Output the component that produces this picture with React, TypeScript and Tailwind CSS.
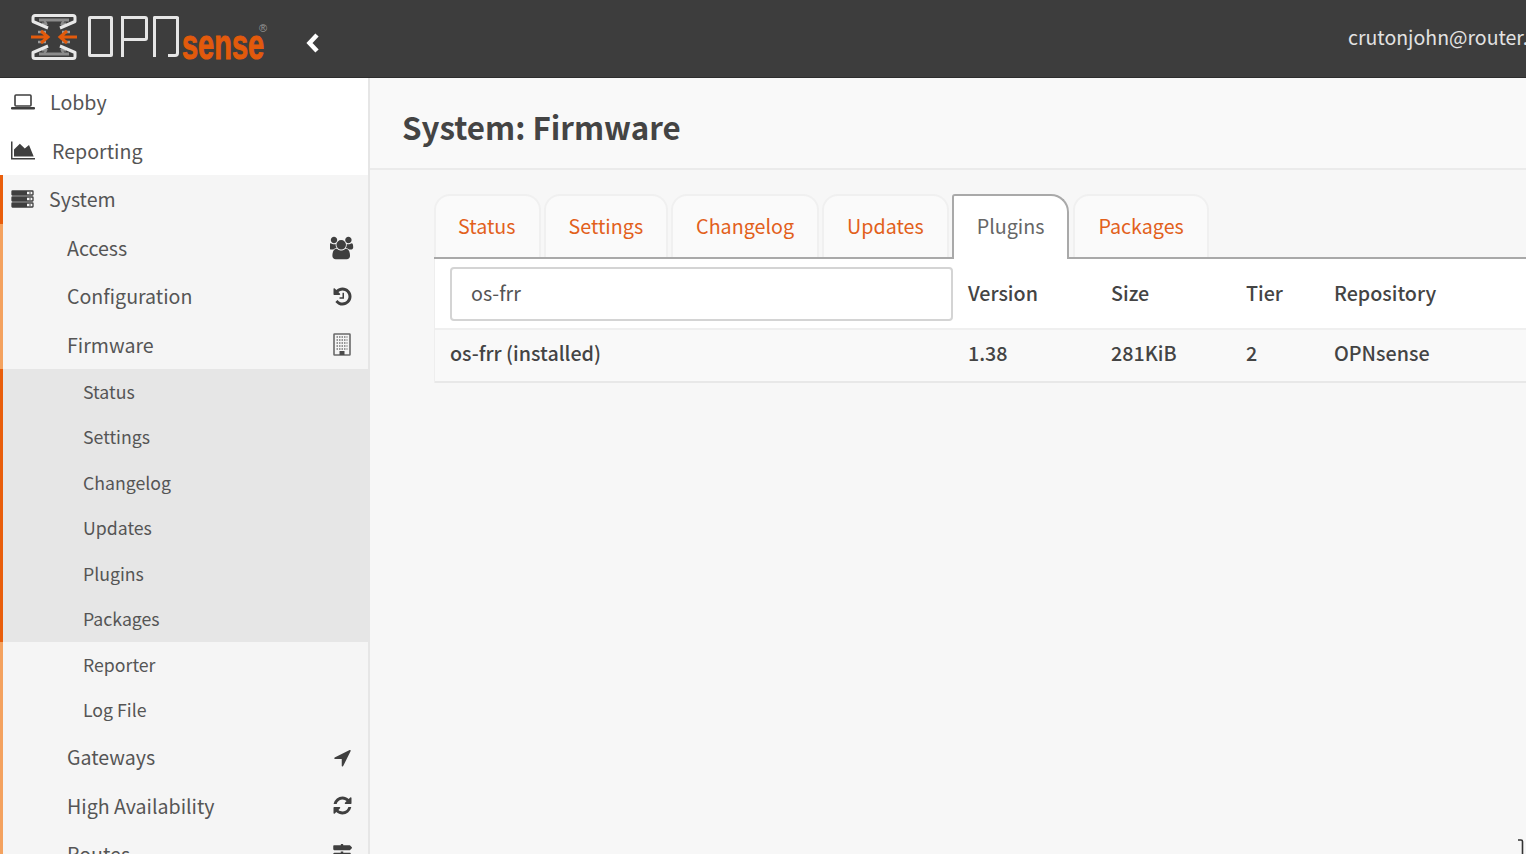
import { FaMapSigns } from 'react-icons/fa'
import type { ReactNode } from 'react'

// icon paths below are the old font-awesome 4 shapes, the fa set in react-icons only has v5
function FaFour({ d, w, size }: { d: string; w: number; size: number }) {
  return (
    <svg width={size} height={size} viewBox={`0 0 ${w} 1792`} fill="#3f3f3f">
      <path d={d} />
    </svg>
  )
}

const usersPath =
  'M529 896q-162 5-265 128h-134q-82 0-138-40.500t-56-118.500q0-353 124-353 6 0 43.500 21t97.500 42.500 119 21.500q67 0 133-23-5 37-5 66 0 139 81 256zm1071 637q0 120-73 189.500t-194 69.500h-874q-121 0-194-69.500t-73-189.500q0-53 3.500-103.500t14-109 26.500-108.500 43-97.500 62-81 85.500-53.500 111.500-20q10 0 43 21.500t73 48 107 48 135 21.500 135-21.500 107-48 73-48 43-21.500q61 0 111.500 20t85.500 53.500 62 81 43 97.500 26.500 108.500 14 109 3.500 103.500zm-1024-1277q0 106-75 181t-181 75-181-75-75-181 75-181 181-75 181 75 75 181zm704 384q0 159-112.500 271.500t-271.500 112.500-271.500-112.500-112.500-271.500 112.500-271.500 271.500-112.500 271.500 112.500 112.500 271.500zm576 225q0 78-56 118.500t-138 40.500h-134q-103-123-265-128 81-117 81-256 0-29-5-66 66 23 133 23 59 0 119-21.500t97.500-42.500 43.500-21q124 0 124 353zm-128-609q0 106-75 181t-181 75-181-75-75-181 75-181 181-75 181 75 75 181z'
const historyPath =
  'M1536 896q0 156-61 298t-164 245-245 164-298 61q-172 0-327-72.500t-264-204.500q-7-10-6.500-22.500t8.500-20.500l137-138q10-9 25-9 16 2 23 12 73 95 179 147t225 52q104 0 198.500-40.500t163.500-109.500 109.500-163.500 40.500-198.500-40.500-198.500-109.500-163.500-163.500-109.500-198.500-40.500q-98 0-188 35.500t-160 101.500l137 138q31 30 14 69-17 40-59 40h-448q-26 0-45-19t-19-45v-448q0-42 40-59 39-17 69 14l130 129q107-101 244.500-156.500t284.500-55.500q156 0 298 61t245 164 164 245 61 298zm-640-288v448q0 14-9 23t-23 9h-320q-14 0-23-9t-9-23v-64q0-14 9-23t23-9h224v-352q0-14 9-23t23-9h64q14 0 23 9t9 23z'
const arrowPath =
  'M1593 349l-640 1280q-17 35-57 35-5 0-15-2-22-5-35.500-22.500t-13.500-39.500v-576h-576q-22 0-39.500-13.500t-22.500-35.500 4-42 29-30l1280-640q13-7 29-7 27 0 45 19 15 14 18.500 34.500t-6.500 39.500z'
const refreshPath =
  'M1511 1056q0 5-1 7-64 268-268 434.500t-478 166.500q-146 0-282.500-55t-243.500-157l-129 129q-19 19-45 19t-45-19-19-45v-448q0-26 19-45t45-19h448q26 0 45 19t19 45-19 45l-137 137q71 66 161 102t187 36q134 0 250-65t186-179q11-17 53-117 8-23 30-23h192q13 0 22.500 9.500t9.500 22.500zm25-800v448q0 26-19 45t-45 19h-448q-26 0-45-19t-19-45 19-45l138-138q-148-137-349-137-134 0-250 65t-186 179q-11 17-53 117-8 23-30 23h-199q-13 0-22.500-9.500t-9.500-22.500v-7q65-268 270-434.500t480-166.500q146 0 284 55.500t245 156.500l130-129q19-19 45-19t45 19 19 45z'

function AreaIcon() {
  return (
    <svg width="26" height="23" viewBox="0 0 2048 1792" fill="#3f3f3f">
      <path d="M2048 1536v128H0V128h128v1408h1920zM256 1408V800l500-480 420 400 360-300 400 988z" />
    </svg>
  )
}

function LaptopIcon() {
  return (
    <svg width="24" height="18" viewBox="0 0 24 18" fill="none" stroke="#3f3f3f">
      <rect x="4" y="2" width="16" height="11" rx="1" strokeWidth="1.6" />
      <path d="M1 15.2h22" strokeWidth="2.4" strokeLinecap="round" />
    </svg>
  )
}

function ServerIcon() {
  return (
    <svg width="24" height="18" viewBox="0 0 24 18" fill="none">
      {[1, 7, 13].map((y) => (
        <g key={y}>
          <rect x="1" y={y} width="21" height="4" rx="0.5" stroke="#3f3f3f" strokeWidth="1.3" />
          <rect x="1" y={y} width="15" height="4" fill="#3f3f3f" />
          <rect x="18" y={y + 1.2} width="2" height="1.6" fill="#8a8a8a" />
        </g>
      ))}
    </svg>
  )
}

function BuildingIcon() {
  return (
    <svg width="18" height="23" viewBox="0 0 18 23" fill="none">
      <rect x="1" y="1" width="16" height="21" rx="0.5" stroke="#6a6a6a" strokeWidth="1.6" />
      <path d="M3.5 4h11M3.5 7h11M3.5 10h11M3.5 13h11M3.5 16h11" stroke="#777777" strokeWidth="1.6" strokeDasharray="1.5 1" />
      <rect x="6.5" y="18" width="5" height="4" fill="#4a4a4a" />
    </svg>
  )
}

function LogoMark() {
  return (
    <svg width="48" height="48" viewBox="0 0 48 48" fill="none" className="shrink-0">
      <path d="M9 7h30M9 41h30M12 11h5M31 11h5M12 37h5M31 37h5" stroke="#8c8c8c" strokeWidth="3" />
      <path d="M14 7l3 5M34 7l-3 5M14 41l3-5M34 41l-3-5" stroke="#8c8c8c" strokeWidth="2" />
      <path
        d="M5 2.5h38a2 2 0 0 1 2 2v4L30 15M3 4.500a2 2 0 0 1 2-2M3 4.500v4L18 15M5 45.500h38a2 2 0 0 0 2-2v-4L30 33M3 43.500a2 2 0 0 0 2 2M3 43.500v-4L18 33"
        stroke="#e8e8e8"
        strokeWidth="3"
        strokeLinejoin="round"
      />
      <path d="M8 19h8M8 29h8M32 19h8M32 29h8" stroke="#9a9a9a" strokeWidth="2.5" />
      <path d="M1 24h17M11 18l7 6-7 6M47 24H30M37 18l-7 6 7 6" stroke="#e25a0c" strokeWidth="3" />
    </svg>
  )
}

function Logo() {
  return (
    <div className="-mt-[4px] flex items-start" aria-label="OPNsense">
      <LogoMark />
      <div className="ml-[10px] mt-[3px] flex h-[41px] shrink-0">
        <div className="h-[41px] w-[25px] rounded-[2px] border-[3px] border-[#e6e6e6]" />
        <div className="ml-[8px] flex w-[27px] flex-col">
          <div className="h-[25px] rounded-tr-[3px] rounded-br-[3px] border-[3px] border-[#e6e6e6]" />
          <div className="h-[16px] w-[3px] bg-[#e6e6e6]" />
        </div>
        <div className="ml-[5px] flex">
          <div className="h-[41px] w-[15px] rounded-tl-[2px] border-l-[3px] border-t-[3px] border-[#e6e6e6]" />
          <div className="h-[41px] w-[11px] rounded-tr-[2px] rounded-br-[4px] border-r-[3px] border-t-[3px] border-b-[3px] border-[#e6e6e6]" />
        </div>
      </div>
      <div className="relative ml-[3px] mt-[19px] h-[26px] w-[84px]">
        <span className="block w-[120px] origin-left scale-x-[0.69] font-['Liberation_Sans',sans-serif] text-[42px] leading-[26px] font-bold text-[#e25a0c] [-webkit-text-stroke:1px_#e25a0c]">
          sense
        </span>
        <span className="absolute -top-[9px] -right-[1px] font-['Liberation_Sans',sans-serif] text-[11px] leading-[10px] text-[#9a9a9a]">®</span>
      </div>
    </div>
  )
}

function TopRow({ icon, label, gap, active }: { icon: ReactNode; label: string; gap: string; active?: boolean }) {
  return (
    <div
      className={`flex h-[48.5px] items-center border-l-[3px] pl-[8px] text-[19.6px] ${
        active ? 'border-[#e95e0b] bg-[#f5f5f5]' : 'border-white bg-white'
      }`}
    >
      <span className="flex w-[24px] shrink-0 items-center justify-center">{icon}</span>
      <span className={`pb-[1px] ${gap}`}>{label}</span>
    </div>
  )
}

function MenuRow({ label, icon }: { label: string; icon?: ReactNode }) {
  return (
    <div className="flex h-[48.5px] items-center border-l-[3px] border-[#f4a25f] pl-[64px] pr-[12px] text-[19.6px]">
      <span className="pb-[1px]">{label}</span>
      {icon && <span className="ml-auto flex w-[28px] justify-center text-[#3f3f3f]">{icon}</span>}
    </div>
  )
}

function SubRow({ label, current }: { label: string; current?: boolean }) {
  return (
    <div
      className={`flex h-[45.5px] items-center border-l-[3px] pb-[1px] pl-[80px] text-[17.7px] ${
        current ? 'border-[#e95e0b]' : 'border-[#f4a25f]'
      }`}
    >
      {label}
    </div>
  )
}

const tabs = ['Status', 'Settings', 'Changelog', 'Updates', 'Plugins', 'Packages']

function Sidebar() {
  return (
    <aside className="h-full w-[370px] shrink-0 overflow-hidden border-r-2 border-[#e6e6e6] bg-[#f5f5f5] text-[#555555]">
      <TopRow icon={<LaptopIcon />} label="Lobby" gap="ml-[15px]" />
      <TopRow icon={<AreaIcon />} label="Reporting" gap="ml-[17px]" />
      <TopRow icon={<ServerIcon />} label="System" gap="ml-[14px]" active />
      <MenuRow label="Access" icon={<FaFour d={usersPath} w={1920} size={24} />} />
      <MenuRow label="Configuration" icon={<FaFour d={historyPath} w={1536} size={21} />} />
      <MenuRow label="Firmware" icon={<BuildingIcon />} />
      <div className="bg-[#e6e6e6]">
        <SubRow label="Status" current />
        <SubRow label="Settings" current />
        <SubRow label="Changelog" current />
        <SubRow label="Updates" current />
        <SubRow label="Plugins" current />
        <SubRow label="Packages" current />
      </div>
      <SubRow label="Reporter" />
      <SubRow label="Log File" />
      <MenuRow label="Gateways" icon={<FaFour d={arrowPath} w={1792} size={21} />} />
      <MenuRow label="High Availability" icon={<FaFour d={refreshPath} w={1536} size={21} />} />
      <MenuRow label="Routes" icon={<FaMapSigns size={20} />} />
    </aside>
  )
}

function Tabs() {
  return (
    <div className="flex h-[65px] border-b-2 border-[#a9a9a9]">
      {tabs.map((tab, i) =>
        tab === 'Plugins' ? (
          <div
            key={tab}
            className="relative z-10 mr-[4px] flex h-[65px] items-center rounded-tl-[3px] rounded-tr-[18px] border-2 border-b-0 border-[#a9a9a9] bg-white px-[23px] pb-[4px] text-[19.7px] text-[#666666]"
          >
            {tab}
          </div>
        ) : (
          <div
            key={tab}
            className={`mr-[3px] flex h-[63px] items-center rounded-t-[16px] border-2 border-b-0 border-[#f0f0f0] bg-[#fafafa] pb-[2px] text-[19.7px] text-[#e2601b] ${
              i === 0 ? 'pl-[22px] pr-[23px]' : 'px-[23px]'
            }`}
          >
            {tab}
          </div>
        ),
      )}
    </div>
  )
}

function PluginTable() {
  const cols = 'grid grid-cols-[533px_143px_135px_88px_1fr] items-center'
  return (
    <div className="border-l border-[#eeeeee] bg-white text-[19.7px] text-[#444444]">
      <div className={`${cols} h-[71px] border-b-2 border-[#efefef] font-medium`}>
        <div className="pl-[15px]">
          <div className="flex h-[54px] w-[503px] items-center rounded-[4px] border-2 border-[#d4d4d4] bg-white pb-[2px] pl-[19px] font-normal text-[#555555]">
            os-frr
          </div>
        </div>
        <span className="pb-[2px]">Version</span>
        <span className="pb-[2px]">Size</span>
        <span className="pb-[2px]">Tier</span>
        <span className="pb-[2px]">Repository</span>
      </div>
      <div className={`${cols} h-[53px] border-b-2 border-[#e8e8e8] bg-[#f9f9f9] pb-[6px] font-medium`}>
        <span className="pl-[15px]">os-frr (installed)</span>
        <span>1.38</span>
        <span>281KiB</span>
        <span>2</span>
        <span>OPNsense</span>
      </div>
    </div>
  )
}

export default function App() {
  return (
    <div className="relative flex h-screen flex-col overflow-hidden bg-[#f7f7f7] font-['Noto_Sans_CJK_SC','Noto_Sans',sans-serif]">
      <header className="flex h-[78px] shrink-0 items-center border-b border-[#2d2d2d] bg-[#3d3d3d]">
        <div className="ml-[30px] flex w-[340px] shrink-0 items-center">
          <Logo />
          <svg width="16" height="22" viewBox="0 0 16 22" fill="none" className="ml-[39px] mt-[8px]">
            <path d="M12 3L4.5 11 12 19" stroke="#ffffff" strokeWidth="4.5" />
          </svg>
        </div>
        <div className="min-w-0 flex-1 overflow-hidden whitespace-nowrap pl-[978px] text-[19.5px] leading-[24px] text-[#e3e3e3]">
          <span className="relative -top-[2px]">crutonjohn@router.lan</span>
        </div>
      </header>
      <div className="flex min-h-0 flex-1">
        <Sidebar />
        <main className="min-w-0 flex-1">
          <div className="flex h-[92px] items-center border-b-2 border-[#ebebeb] bg-[#f9f9f9] pl-[32px] pt-[9px] text-[31.3px] font-semibold text-[#444444]">
            System: Firmware
          </div>
          <div className="pl-[64px] pt-[24px]">
            <Tabs />
            <PluginTable />
          </div>
        </main>
      </div>
      <svg width="8" height="15" viewBox="0 0 8 15" fill="none" className="absolute right-0 bottom-0">
        <path d="M0 1h3a1.5 1.5 0 0 1 1.5 1.5V15" stroke="#333333" strokeWidth="1.6" />
      </svg>
    </div>
  )
}
